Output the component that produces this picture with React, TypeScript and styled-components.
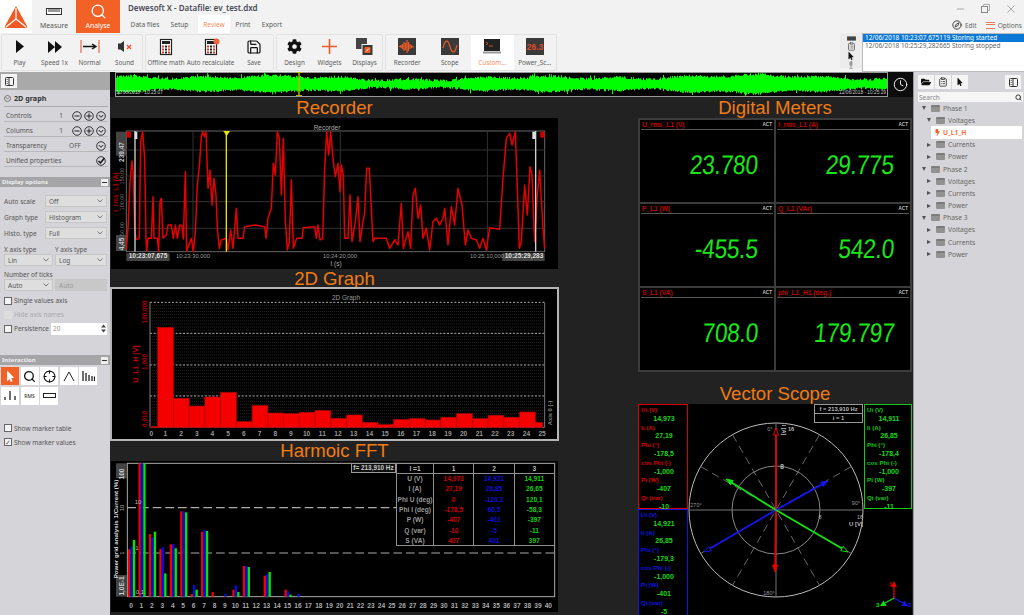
import React from "react";
import styled, { createGlobalStyle } from "styled-components";
import { Clock, ClipboardList, Compass, Crosshair, Save, Search } from "lucide-react";
import { FaBolt, FaCog, FaFolderOpen, FaMousePointer } from "react-icons/fa";

const GlobalStyle = createGlobalStyle`
  html, body { margin: 0; padding: 0; background: #f2f2f2; }
  * { box-sizing: border-box; }
  #root { width: 1024px; height: 615px; overflow: hidden; }
`;

const ORANGE = "#f26125";
const UI_FONT = `"Noto Sans", "Open Sans", sans-serif`;
const CHART_FONT = `"Liberation Sans", Arial, sans-serif`;

const Page = styled.div`
  width: 1024px;
  height: 615px;
  display: flex;
  flex-direction: column;
  overflow: hidden;
  font-family: ${UI_FONT};
  color: #555;
  background: #f2f2f2;
`;

/* ---------- title bar ---------- */

const TitleBar = styled.header`
  height: 33px;
  display: flex;
`;

const LogoBox = styled.div`
  width: 32px;
  height: 33px;
  background: #fff;
  display: flex;
  align-items: center;
  justify-content: center;
`;

const ModeTab = styled.div<{ $active?: boolean }>`
  width: 44px;
  height: 33px;
  display: flex;
  flex-direction: column;
  align-items: center;
  padding-top: 2px;
  font-size: 6.9px;
  line-height: 11px;
  color: ${(p) => (p.$active ? "#fff" : "#555")};
  background: ${(p) => (p.$active ? ORANGE : "transparent")};
`;

const ModeIcon = styled.div`
  height: 18px;
  display: flex;
  align-items: center;
  justify-content: center;
`;

const TitleColumn = styled.div`
  margin-left: 8px;
  display: flex;
  flex-direction: column;
`;

const AppTitle = styled.div`
  font-size: 8px;
  font-weight: 600;
  line-height: 15px;
  color: #4a4a55;
`;

const MenuTabs = styled.nav`
  display: flex;
  height: 18px;
  margin-left: 1px;
`;

const MenuTab = styled.div<{ $active?: boolean; $w: number }>`
  width: ${(p) => p.$w}px;
  display: flex;
  align-items: center;
  justify-content: center;
  font-size: 6.6px;
  color: ${(p) => (p.$active ? "#f58a60" : "#5a5a5a")};
  background: ${(p) => (p.$active ? "#fff" : "transparent")};
`;

const WindowArea = styled.div`
  margin-left: auto;
  width: 90px;
  display: flex;
  flex-direction: column;
`;

const WindowButtons = styled.div`
  height: 17px;
  display: flex;
  align-items: center;
  justify-content: space-between;
  padding: 0 9px 0 23px;
  color: #8a8a8a;
`;

const QuickActions = styled.div`
  display: flex;
  align-items: center;
  gap: 3px;
  font-size: 6.5px;
  color: #666;
  height: 16px;
  padding-left: 18px;
`;

const QuickGap = styled.span`
  width: 3px;
`;

const OptionsLines = styled.span`
  width: 9px;
  height: 7px;
  border-top: 1.5px solid #ee7b5b;
  border-bottom: 1.5px solid #ee7b5b;
  position: relative;
  &::after {
    content: "";
    display: block;
    height: 1.5px;
    margin-top: 1.3px;
    background: #ee7b5b;
  }
`;

/* ---------- toolbar ---------- */

const Toolbar = styled.div`
  height: 39px;
  display: flex;
  padding-left: 1px;
  gap: 2px;
`;

const ToolGroup = styled.div`
  display: flex;
  height: 37px;
  margin-top: 1px;
  border: 1px solid #e2e2e2;
  border-radius: 2px;
`;

const ToolButton = styled.div<{ $w: number; $active?: boolean }>`
  width: ${(p) => p.$w}px;
  display: flex;
  flex-direction: column;
  align-items: center;
  background: ${(p) => (p.$active ? "#fff" : "transparent")};
  color: ${(p) => (p.$active ? "#f58a60" : "#5c5c5c")};
  font-size: 6.3px;
  white-space: nowrap;
`;

const ToolIcon = styled.div`
  height: 23px;
  display: flex;
  align-items: center;
  justify-content: center;
  color: #111;
`;

const ToolLabel = styled.span`
  line-height: 10px;
`;

const EventArea = styled.div`
  margin-left: auto;
  display: flex;
  height: 39px;
`;

const EventIcons = styled.div`
  width: 22px;
  height: 35px;
  background: #ececec;
  display: flex;
  flex-direction: column;
  align-items: center;
  justify-content: flex-start;
  gap: 1px;
  padding-top: 3px;
  color: #555;
  & > svg {
    flex: none;
  }
`;

const RulerSmall = styled.svg`
  width: 9px;
  height: 5px;
`;

const EventList = styled.div`
  width: 162px;
  background: #fff;
  border: 1px solid #bbb;
  border-right: none;
  font-size: 6.45px;
  line-height: 8px;
`;

const EventRow = styled.div<{ $selected?: boolean }>`
  height: 8px;
  padding-left: 2px;
  white-space: nowrap;
  color: ${(p) => (p.$selected ? "#fff" : "#666")};
  background: ${(p) => (p.$selected ? "#0a78d7" : "transparent")};
`;

/* ---------- main area ---------- */

const Main = styled.main`
  flex: 1;
  display: flex;
  min-height: 0;
`;

const LeftPanel = styled.aside`
  width: 110px;
  background: #d5d4d8;
  display: flex;
  flex-direction: column;
  font-size: 6.5px;
  color: #555;
`;

const PanelTop = styled.div`
  height: 18px;
  background: #a9a9a9;
  padding: 2px 1px;
`;

const SquareButton = styled.div`
  width: 16px;
  height: 14px;
  background: #f4f4f4;
  display: flex;
  align-items: center;
  justify-content: center;
`;

const PanelHeading = styled.div`
  height: 17px;
  margin: 0 2px 0 4px;
  display: flex;
  align-items: center;
  gap: 3px;
  font-size: 7.2px;
  font-weight: 700;
  color: #333;
  border-bottom: 1px solid #aaa;
`;

const PropRow = styled.div`
  height: 15px;
  margin: 0 2px 0 4px;
  padding: 3px 0 0 2px;
  display: flex;
  align-items: center;
  border-bottom: 1px solid #b8b8b8;
`;

const PropName = styled.span<{ $w?: number }>`
  width: ${(p) => p.$w ?? 48}px;
`;

const PropValue = styled.span<{ $shift?: number }>`
  width: 14px;
  margin-left: ${(p) => p.$shift ?? 0}px;
  text-align: center;
`;

const PropButtons = styled.span`
  margin-left: auto;
  margin-right: 2px;
  display: flex;
  gap: 2px;
`;

const SectionHeader = styled.div<{ $top: number }>`
  margin-top: ${(p) => p.$top}px;
  height: 10px;
  background: #a5a5a8;
  color: #eee;
  font-size: 6px;
  font-weight: 700;
  padding: 0 2px;
  display: flex;
  align-items: center;
  justify-content: space-between;
`;

const CollapseBox = styled.span`
  width: 7px;
  height: 7px;
  background: #eee;
  display: flex;
  align-items: center;
  justify-content: center;
  &::after {
    content: "";
    width: 5px;
    height: 1px;
    background: #333;
  }
`;

const FieldRow = styled.div<{ $top?: number }>`
  display: flex;
  align-items: center;
  height: 12px;
  margin: ${(p) => p.$top ?? 4}px 3px 0 4px;
`;

const FieldName = styled.span`
  width: 41px;
`;

const FieldPair = styled.div<{ $top: number }>`
  display: grid;
  grid-template-columns: 49px 52px;
  column-gap: 2px;
  margin: ${(p) => p.$top}px 3px 0 4px;
`;

const SmallCaption = styled.span<{ $wide?: boolean }>`
  line-height: 9px;
  height: 9px;
  display: block;
  ${(p) => (p.$wide ? "grid-column: span 2;" : "")}
`;

const Dropdown = styled.div<{ $disabled?: boolean }>`
  flex: 1;
  height: 12px;
  background: ${(p) => (p.$disabled ? "#c8c8c8" : "#dededf")};
  border: 1px solid #c6c6c6;
  display: flex;
  align-items: center;
  justify-content: space-between;
  padding: 0 3px;
  color: ${(p) => (p.$disabled ? "#999" : "#555")};
`;

const CheckRow = styled.label<{ $top: number; $faded?: boolean }>`
  display: flex;
  align-items: center;
  gap: 2px;
  height: 9px;
  margin: ${(p) => p.$top}px 0 0 4px;
  color: ${(p) => (p.$faded ? "#aaa" : "#555")};
`;

const CheckBox = styled.span<{ $faded?: boolean }>`
  width: 8px;
  height: 8px;
  flex: none;
  background: ${(p) => (p.$faded ? "#dcdcdc" : "#f4f4f4")};
  border: 1px solid ${(p) => (p.$faded ? "#ddd" : "#666")};
  display: flex;
  align-items: center;
  justify-content: center;
  font-size: 7px;
  line-height: 7px;
`;

const SpinField = styled.div`
  width: 58px;
  height: 12px;
  margin-left: auto;
  margin-right: 3px;
  background: #fff;
  color: #999;
  padding-left: 2px;
  display: flex;
  align-items: center;
  justify-content: space-between;
`;

const ToolGrid = styled.div`
  display: grid;
  grid-template-columns: repeat(5, 18px);
  grid-auto-rows: 18px;
  gap: 1.5px;
  margin: 2px 0 0 1px;
`;

const InteractionTool = styled.div<{ $active?: boolean }>`
  background: ${(p) => (p.$active ? ORANGE : "#fff")};
  display: flex;
  align-items: center;
  justify-content: center;
  color: #111;
  font-size: 5px;
`;

/* ---------- centre ---------- */

const Center = styled.section`
  width: 803px;
  background: #222;
  display: flex;
  flex-direction: column;
`;

const Overview = styled.div`
  height: 25px;
  padding-left: 5px;
  background: #0c0c0c;
  display: flex;
  flex: none;
`;

const ClockBox = styled.div`
  width: 25px;
  display: flex;
  align-items: center;
  justify-content: center;
  color: #e8e8e8;
`;

const Columns = styled.div`
  flex: 1;
  display: flex;
  justify-content: space-between;
  padding: 0 1px;
  min-height: 0;
`;

const WidgetColumn = styled.div<{ $w: number }>`
  width: ${(p) => p.$w}px;
  display: flex;
  flex-direction: column;
`;

const WidgetTitle = styled.h2<{ $h: number; $top?: number }>`
  margin: ${(p) => p.$top ?? 0}px 0 0;
  height: ${(p) => p.$h}px;
  line-height: ${(p) => p.$h}px;
  text-align: center;
  font-family: ${CHART_FONT};
  font-weight: 400;
  font-size: 18.6px;
  color: #f07c12;
`;

const ChartFrame = styled.div<{ $h: number; $boxed?: boolean }>`
  position: relative;
  height: ${(p) => p.$h}px;
  background: #000;
  ${(p) => (p.$boxed ? "outline: 2px solid #b5b5b5; outline-offset: -1px;" : "")}
  svg {
    display: block;
  }
`;

const ChartSvg = styled.svg`
  font-family: ${CHART_FONT};
  overflow: visible;
`;

/* harmonic table */

const FreqTag = styled.div`
  position: absolute;
  top: 2px;
  right: 162px;
  height: 10px;
  width: 45px;
  border: 1px solid #999;
  background: #111;
  color: #ccc;
  font: 700 6.4px/8px ${CHART_FONT};
  text-align: center;
`;

const HarmonicTable = styled.table`
  position: absolute;
  top: 2px;
  right: 3px;
  width: 159px;
  border-collapse: collapse;
  table-layout: fixed;
  background: #000;
  font: 700 6.6px ${CHART_FONT};
  th, td {
    height: 10.3px;
    padding: 0;
    text-align: center;
    border-left: 1.5px solid #8f8f8f;
    border-right: 1.5px solid #8f8f8f;
    white-space: nowrap;
  }
  thead th {
    color: #bbb;
    height: 10px;
    border: 1.5px solid #8f8f8f;
  }
  thead th:first-child {
    width: 37px;
  }
  tbody tr:last-child > * {
    border-bottom: 1.5px solid #8f8f8f;
  }
  tbody th {
    color: #999;
  }
`;

const PhaseCell = styled.td<{ $c: string }>`
  color: ${(p) => p.$c};
`;

/* meters */

const MeterGrid = styled.div`
  height: 254px;
  display: grid;
  grid-template-columns: repeat(2, 1fr);
  grid-template-rows: repeat(3, 1fr);
  background: #000;
  border: 1px solid #3c3c3c;
`;

const MeterCell = styled.div`
  border: 1px solid #3c3c3c;
  display: flex;
  flex-direction: column;
`;

const MeterHeader = styled.div`
  height: 10px;
  margin: 0 1px;
  border-bottom: 1px solid #555;
  display: flex;
  align-items: center;
  justify-content: space-between;
  padding: 0 1px;
  font: 700 6.6px ${CHART_FONT};
  color: #c00000;
`;

const MeterAct = styled.span`
  color: #bbb;
  font-size: 4.6px;
`;

const MeterValue = styled.div`
  flex: 1;
  display: flex;
  align-items: center;
  justify-content: flex-end;
  padding-right: 16px;
  padding-bottom: 2px;
  font: 400 27px ${CHART_FONT};
  letter-spacing: -0.3px;
  color: #19e619;
  span {
    display: block;
    transform: skewX(-5deg) scaleX(0.84);
    transform-origin: right center;
  }
`;

/* vector scope */

const ScopeFrame = styled.div`
  position: relative;
  height: 211px;
  background: #000;
  display: grid;
  grid-template-columns: 50px 176px 48px;
  overflow: hidden;
`;

const ScopeSide = styled.div`
  display: flex;
  flex-direction: column;
`;

const ScopeBox = styled.div<{ $c: string; $open?: boolean }>`
  height: ${(p) => (p.$open ? 106 : 105)}px;
  border: 1px solid ${(p) => p.$c};
  ${(p) => (p.$open ? "border-bottom: none;" : "")}
  color: ${(p) => p.$c};
  padding: 1px 0 0 2px;
  font: 700 6.2px/8.8px ${CHART_FONT};
`;

const ScopeLabel = styled.div``;

const ScopeNumber = styled.div`
  color: #19d819;
  text-align: center;
  font-size: 7px;
`;

const ScopeTag = styled.div`
  position: absolute;
  top: 0;
  right: 49px;
  width: 49px;
  border: 1px solid #999;
  font: 700 5.8px/8px ${CHART_FONT};
  text-align: center;
  color: #bbb;
  & > div + div {
    border-top: 1px solid #999;
  }
`;

const AxisWidget = styled.svg`
  position: absolute;
  right: 0;
  bottom: 7px;
  font-family: ${CHART_FONT};
`;

/* ---------- right panel ---------- */

const RightPanel = styled.aside`
  width: 111px;
  background: #d5d4d8;
  border-left: 1px solid #999;
  display: flex;
  flex-direction: column;
  font-size: 6.7px;
  color: #666;
`;

const RightTools = styled.div`
  display: flex;
  gap: 1px;
  padding: 3px 3px 0 4px;
  height: 19px;
`;

const RightToolSpacer = styled.span`
  flex: 1;
`;

const SearchBox = styled.div`
  height: 10px;
  margin: 1px 1px 0 4px;
  padding: 0 1px 0 1px;
  background: #f6f6f6;
  color: #888;
  font-size: 6.6px;
  display: flex;
  align-items: center;
  justify-content: space-between;
`;

const Tree = styled.div`
  display: flex;
  flex-direction: column;
`;

const TreeRow = styled.div<{ $level: number; $selected?: boolean }>`
  height: 12.2px;
  display: flex;
  align-items: center;
  margin-left: ${(p) => 7 + (p.$level - 1) * 5}px;
  margin-right: 2px;
  gap: 2px;
  background: ${(p) => (p.$selected ? "#fff" : "transparent")};
  color: ${(p) => (p.$selected ? ORANGE : "#666")};
  font-weight: ${(p) => (p.$selected ? 600 : 400)};
`;

const TreeArrow = styled.span<{ $open?: boolean }>`
  width: 0;
  height: 0;
  margin: 0 3px 0 1px;
  flex: none;
  ${(p) =>
    p.$open
      ? "border-left: 2.5px solid transparent; border-right: 2.5px solid transparent; border-top: 4px solid #555;"
      : "border-top: 2.5px solid transparent; border-bottom: 2.5px solid transparent; border-left: 4px solid #555;"}
`;

const TreeFolder = styled.span`
  width: 9px;
  height: 7px;
  flex: none;
  margin-right: 1px;
  background: #929292;
  border-top: 2px solid #7c7c7c;
  border-radius: 1px;
`;

const BoltSlot = styled.span`
  width: 10px;
  display: inline-flex;
  justify-content: flex-end;
`;

/* ---------- small drawings ---------- */

const Logo = () => (
  <svg width="24" height="24" viewBox="0 0 24 24">
    <path d="M12 1 L23 21 Q23.5 23 21 23 L3 23 Q.5 23 1 21 Z" fill="#ee5a24" />
    <path d="M12 3 V14 M12 14 L2 22 M12 14 L22 22" stroke="#fff" strokeWidth="1.2" fill="none" />
  </svg>
);

const Ruler = () => (
  <svg width="16" height="7" viewBox="0 0 16 7">
    <rect x=".5" y=".5" width="15" height="6" fill="#fff" stroke="#333" />
    <path d="M3 1v3M5 1v3M7 1v3M9 1v3M11 1v3M13 1v3" stroke="#333" />
  </svg>
);

const Calc = ({ badge }: { badge?: boolean }) => (
  <svg width="18" height="18" viewBox="0 0 18 18">
    <rect x="3.5" y="1.5" width="11" height="15" fill="#fff" stroke="#222" strokeWidth="1.2" />
    <rect x="5" y="3" width="8" height="3" fill="#222" />
    {[0, 1, 2].map((c) =>
      [0, 1, 2].map((r) => (
        <rect key={`${c}${r}`} x={5 + c * 3} y={7.5 + r * 3} width="2" height="2" fill={c === 1 ? "#222" : "#c8402a"} />
      ))
    )}
    {badge && <circle cx="14.5" cy="3.5" r="3" fill="#f0653a" />}
  </svg>
);

const DarkTile = ({ children }: { children: React.ReactNode }) => (
  <svg width="18" height="17" viewBox="0 0 18 17">
    <rect width="18" height="17" fill="#3a3a3a" />
    {children}
  </svg>
);

const toolGroups = [
  [
    {
      w: 35,
      label: "Play",
      icon: (
        <svg width="10" height="13" viewBox="0 0 10 13">
          <path d="M1 0 L9 6.5 L1 13 Z" fill="#111" />
        </svg>
      ),
    },
    {
      w: 35,
      label: "Speed 1x",
      icon: (
        <svg width="14" height="12" viewBox="0 0 14 12">
          <path d="M0 0 L7 6 L0 12 Z M7 0 L14 6 L7 12 Z" fill="#111" />
        </svg>
      ),
    },
    {
      w: 35,
      label: "Normal",
      icon: (
        <svg width="20" height="13" viewBox="0 0 20 13">
          <path d="M1 0V13M19 0V13" stroke="#ee6a4a" strokeWidth="1.2" />
          <path d="M3 6.5H15M12 4L16 6.5L12 9" stroke="#111" strokeWidth="1.4" fill="none" />
        </svg>
      ),
    },
    {
      w: 35,
      label: "Sound",
      icon: (
        <svg width="14" height="13" viewBox="0 0 14 13">
          <path d="M0 3.5H2.5L6 1V12L2.5 9.5H0Z" fill="#333" />
          <path d="M9 5L13 9M13 5L9 9" stroke="#e84a2a" strokeWidth="1.2" />
        </svg>
      ),
    },
  ],
  [
    { w: 40, label: "Offline math", icon: <Calc /> },
    { w: 49, label: "Auto recalculate", icon: <Calc badge /> },
    { w: 38, label: "Save", icon: <Save size={16} strokeWidth={1.8} color="#111" /> },
  ],
  [
    { w: 35, label: "Design", icon: <FaCog size={15} color="#111" /> },
    {
      w: 35,
      label: "Widgets",
      icon: (
        <svg width="15" height="15" viewBox="0 0 15 15">
          <path d="M7.5 0V15M0 7.5H15" stroke="#ee5a24" strokeWidth="1.6" />
        </svg>
      ),
    },
    {
      w: 35,
      label: "Displays",
      icon: (
        <svg width="18" height="18" viewBox="0 0 18 18">
          <rect x="0" y="0" width="11" height="11" fill="#444" />
          <rect x="6" y="6.5" width="11" height="11" fill="#3a3a3a" stroke="#f2f2f2" />
          <rect x="8.5" y="9" width="6" height="6" rx="1" fill="#ee5a24" />
          <path d="M10 13.5L13 10.5" stroke="#fff" />
        </svg>
      ),
    },
  ],
  [
    {
      w: 42.5,
      label: "Recorder",
      icon: (
        <DarkTile>
          <path
            d="M1 8.5h2M3 7v3M4.5 6v5M6 4v9M7.5 5v7M9 2v13M10.500 4v9M12 6v5M13.500 7v3M15 8v1.500"
            stroke="#ee5a24"
            strokeWidth="1.2"
          />
        </DarkTile>
      ),
    },
    {
      w: 42.5,
      label: "Scope",
      icon: (
        <DarkTile>
          <path d="M2 10C4 1 7 1 9 8.500S14 16 16 7" stroke="#ee5a24" strokeWidth="1.2" fill="none" />
        </DarkTile>
      ),
    },
    {
      w: 42.5,
      label: "Custom...",
      active: true,
      icon: (
        <svg width="18" height="16" viewBox="0 0 18 16">
          <rect x="1" y="0" width="16" height="12" fill="#222" />
          <path d="M3 3L5 4.500L3 6M6 7H10" stroke="#ee5a24" fill="none" strokeWidth=".8" />
          <rect x="0" y="12.500" width="18" height="2" fill="#999" />
        </svg>
      ),
    },
    {
      w: 42.5,
      label: "Power_Sc...",
      icon: (
        <DarkTile>
          <text x="9" y="11.500" fontSize="8.500" fontWeight="700" textAnchor="middle" fill="#e04a24" fontFamily={CHART_FONT}>
            26.3
          </text>
        </DarkTile>
      ),
    },
  ],
];

const CircleGlyph = ({ kind }: { kind: "minus" | "plus" | "down" | "check" }) => (
  <svg width="10" height="10" viewBox="0 0 10 10">
    <circle cx="5" cy="5" r="4.300" fill="none" stroke="#222" strokeWidth=".9" />
    {kind === "minus" && <path d="M2.500 5H7.500" stroke="#222" />}
    {kind === "plus" && <path d="M2.500 5H7.500M5 2.500V7.500" stroke="#222" />}
    {kind === "down" && <path d="M2.800 4L5 6.300L7.200 4" stroke="#222" fill="none" />}
    {kind === "check" && <path d="M2.500 5L4.500 7L8.500 2" stroke="#111" strokeWidth="1.500" fill="none" />}
  </svg>
);

const Chevron = () => (
  <svg width="6" height="4" viewBox="0 0 6 4">
    <path d="M.5 .5L3 3L5.500 .5" stroke="#777" fill="none" />
  </svg>
);

const PanelToggle = () => (
  <svg width="9" height="9" viewBox="0 0 9 9">
    <rect x=".5" y=".5" width="8" height="8" rx="1" fill="none" stroke="#333" />
    <path d="M4 .5V8.500" stroke="#333" />
    <path d="M1.500 2.500H3M1.500 4.500H3M1.500 6.500H3" stroke="#333" strokeWidth=".6" />
  </svg>
);

const Select = ({ value, disabled }: { value: string; disabled?: boolean }) => (
  <Dropdown $disabled={disabled}>
    {value}
    {!disabled && <Chevron />}
  </Dropdown>
);

/* ---------- chart data ---------- */

const seeded = (seed: number) => {
  let s = seed;
  return () => {
    s = (s * 16807) % 2147483647;
    return s / 2147483647;
  };
};

const overviewPath = (() => {
  const rnd = seeded(4711);
  let d = "";
  for (let x = 116; x < 887; x++) {
    const env = 4.5 + 1.3 * Math.sin(x / 37) + 1 * Math.sin(x / 11 + 2) + 1.2 * Math.sin(x / 93);
    const up = env + rnd() * 2.6 + (rnd() > 0.96 ? 2.5 : 0);
    const down = env + rnd() * 2.4 + (rnd() > 0.97 ? 2.5 : 0);
    d += `M${x + 0.5} ${(84.5 - up).toFixed(1)}V${(85.5 + down).toFixed(1)}`;
  }
  return d;
})();

const recorderTrace: number[][] = [
  [55, 465], [60, 400], [66, 260], [72, 198], [76, 240], [80, 400], [84, 434], [94, 430], [98, 140], [104, 110],
  [110, 190], [114, 430], [116, 468], [120, 430], [130, 430], [135, 305], [138, 430], [148, 430], [152, 470],
  [156, 320], [160, 310], [165, 430], [175, 420], [180, 390], [190, 390], [196, 430], [202, 390], [208, 430],
  [215, 390], [222, 392], [226, 432], [232, 230], [236, 468], [250, 430], [256, 470], [262, 410], [268, 270],
  [274, 215], [280, 125], [284, 110], [290, 125], [294, 110], [300, 280], [306, 225], [312, 330], [318, 250],
  [324, 300], [328, 400], [334, 460], [340, 435], [355, 430], [360, 465], [368, 405], [375, 460], [385, 340],
  [390, 430], [405, 430], [410, 395], [440, 390], [470, 395], [474, 430], [480, 370], [490, 340], [496, 205],
  [502, 240], [508, 110], [514, 130], [520, 300], [526, 130], [532, 375], [538, 465], [544, 440], [550, 255],
  [556, 460], [566, 430], [582, 430], [586, 398], [620, 395], [625, 430], [630, 390], [636, 435], [644, 430],
  [650, 220], [656, 110], [662, 180], [668, 110], [676, 200], [682, 245], [690, 205], [696, 290], [700, 210],
  [706, 240], [710, 430], [720, 430], [726, 300], [732, 440], [742, 380], [750, 305], [756, 440], [770, 350],
  [776, 220], [784, 220], [790, 340], [795, 440], [800, 430], [835, 430], [845, 460], [860, 435], [870, 450],
  [880, 325], [886, 460], [900, 410], [908, 460], [915, 300], [922, 280], [930, 370], [938, 330], [945, 430],
  [955, 400], [965, 465], [975, 380], [985, 370], [995, 390], [1005, 370], [1010, 340], [1020, 450], [1030, 335],
  [1040, 390], [1050, 280], [1062, 330], [1072, 450], [1080, 405], [1090, 430], [1105, 435], [1115, 460],
  [1125, 430], [1135, 465], [1145, 398], [1175, 403], [1185, 250], [1195, 130], [1205, 115], [1212, 150],
  [1222, 110], [1228, 280], [1234, 460], [1240, 440], [1250, 270], [1258, 360], [1266, 215], [1272, 240],
  [1280, 440], [1288, 300], [1295, 225], [1305, 400], [1310, 460],
];

const histogramTops = [470, 172, 385, 408, 381, 367, 455, 407, 429, 431, 427, 422, 445, 435, 457, 464, 448, 446, 450, 442, 431, 446, 436, 442, 426, 457];

const harmonicBars: (number | null)[][] = [
  [328, 320, 300], [70, 70, 70], [282, 292, 275], [327, 322, 400], [313, 312, 325], [214, 214, 217],
  [462, 435, 449], [275, 270, 273], [456, null, null], [null, 462, null], [449, 436, 456], [378, 378, 381],
  [null, null, null], [407, 402, 396], [null, null, null], [449, 454, 464], [null, 462, null],
];

const harmonicRows = [
  ["U (V)", "14,973", "14,921", "14,911"],
  ["I (A)", "27,19", "26,85", "26,65"],
  ["Phi U (deg)", "0", "-120,2", "120,1"],
  ["Phi I (deg)", "-178,5", "60,5", "-58,3"],
  ["P (W)", "-407", "-401", "-397"],
  ["Q (var)", "-10", "-5", "-11"],
  ["S (VA)", "407", "401", "397"],
];

const PHASE_COLORS = ["#d00000", "#1010d8", "#12d012"];

const meters = [
  ["U_rms_L1 (V)", "23.780"],
  ["I_rms_L1 (A)", "29.775"],
  ["P_L1 (W)", "-455.5"],
  ["Q_L1 (VAr)", "542.0"],
  ["S_L1 (VA)", "708.0"],
  ["phi_L1_H1 (deg.)", "179.797"],
];

const scopeBoxes = {
  red: ["14,973", "27,19", "-178,5", "-1,000", "-407", "-10"],
  blue: ["14,921", "26,85", "-179,3", "-1,000", "-401", "-5"],
  green: ["14,911", "26,85", "-178,4", "-1,000", "-397", "-11"],
};

const scopeNames = ["Ui (V)", "Ii (A)", "Phi (°)", "cos Phi (-)", "Pi (W)", "Qi (var)"];

const treeData = [
  { name: "Phase 1", open: true, kids: ["Voltages", "Currents", "Power"] },
  { name: "Phase 2", open: true, kids: ["Voltages", "Currents", "Power"] },
  { name: "Phase 3", open: true, kids: ["Voltages", "Currents", "Power"] },
];

/* ---------- charts ---------- */

const zoomCrop = (x: number, y: number) => `translate(${x} ${y}) scale(0.33333)`;

const OverviewStrip = () => (
  <svg width="773" height="25" viewBox="115 73 773 25">
    <rect x="115.500" y="73.500" width="772" height="24" fill="#000" stroke="#999" />
    <path d={overviewPath} stroke="#00ff00" strokeWidth="1" />
    <path d="M299 73V97" stroke="#b9b400" strokeWidth="1.500" />
    <path d="M296 73.500H302M296 96.500H302" stroke="#b9b400" />
    <text x="116" y="95" fontSize="4.800" fill="#ccc" fontFamily={CHART_FONT}>12/06/2018 - 10:23:07</text>
    <text x="886" y="95" fontSize="4.800" fill="#ccc" textAnchor="end" fontFamily={CHART_FONT}>12/06/2018 - 10:25:29</text>
  </svg>
);

const RecorderChart = () => (
  <ChartSvg width="447" height="151" viewBox="111 118 447 151">
    <text x="327" y="130" fontSize="6.500" fill="#aaa" textAnchor="middle">Recorder</text>
    <g transform={zoomCrop(108, 95)}>
      <rect x="55" y="108" width="1255" height="362" fill="none" stroke="#666" strokeWidth="3" />
      <path d="M55 165H1310M55 243H1310M55 320H1310M55 400H1310M255 108V470M697 108V470M1138 108V470" stroke="#333" strokeWidth="3" />
      <path d={"M" + recorderTrace.map((p) => p.join(" ")).join("L")} stroke="#e60000" strokeWidth="4.500" fill="none" strokeLinejoin="round" />
      <path d="M355 115V470" stroke="#e6e600" strokeWidth="4" />
      <path d="M346 108H366L356 124Z" fill="#e6e600" />
      <path d="M81 108V470M1283 108V470" stroke="#cfcfcf" strokeWidth="4" />
      <rect x="80" y="110" width="8" height="22" fill="#ddd" />
      <rect x="1273" y="110" width="10" height="22" fill="#ddd" />
      <rect x="56" y="110" width="13" height="18" fill="#d00000" />
      <rect x="1297" y="110" width="13" height="18" fill="#d00000" />
      <rect x="24" y="110" width="30" height="72" fill="#444" />
      <rect x="24" y="420" width="30" height="48" fill="#444" />
      <rect x="55" y="475" width="130" height="23" fill="#444" />
      <rect x="1183" y="475" width="127" height="23" fill="#444" />
    </g>
    <text transform="translate(124 152) rotate(-90)" fontSize="6.500" fill="#ccc" fontWeight="700" textAnchor="middle">239,47</text>
    <text transform="translate(124 244) rotate(-90)" fontSize="6.500" fill="#ccc" fontWeight="700" textAnchor="middle">4,45</text>
    <text transform="translate(124 176) rotate(-90)" fontSize="5.500" fill="#777" textAnchor="middle">150,00</text>
    <text transform="translate(124 202) rotate(-90)" fontSize="5.500" fill="#777" textAnchor="middle">100,00</text>
    <text transform="translate(124 229) rotate(-90)" fontSize="5.500" fill="#777" textAnchor="middle">50,00</text>
    <text transform="translate(117.500 192) rotate(-90)" fontSize="6.500" fill="#b00000" fontWeight="700" textAnchor="middle">I_rms_L1 (A)</text>
    <text x="148" y="258" fontSize="6.500" fill="#ddd" fontWeight="700" textAnchor="middle">10:23:07,675</text>
    <text x="193" y="258" fontSize="5.800" fill="#999" textAnchor="middle">10:23:30,000</text>
    <text x="340" y="258" fontSize="5.800" fill="#999" textAnchor="middle">10:24:20,000</text>
    <text x="487" y="258" fontSize="5.800" fill="#999" textAnchor="middle">10:25:10,000</text>
    <text x="524" y="258" fontSize="6.500" fill="#ddd" fontWeight="700" textAnchor="middle">10:25:29,283</text>
    <text x="336" y="266" fontSize="6.500" fill="#aaa" textAnchor="middle">t (s)</text>
  </ChartSvg>
);

const HistogramChart = () => {
  const minors: number[] = [];
  for (let y = 106; y < 472; y += 9.300) minors.push(y);
  return (
    <ChartSvg width="447" height="152" viewBox="111 288 447 152">
      <text x="346" y="300" fontSize="6.500" fill="#999" textAnchor="middle">2D Graph</text>
      <g transform={zoomCrop(108, 270)}>
        {minors.map((y) => (
          <path key={y} d={`M126 ${y}H1310`} stroke="#333" strokeWidth="2" strokeDasharray="3 3" />
        ))}
        <path d="M126 97H1310M126 190H1310M126 285H1310M126 378H1310" stroke="#aaa" strokeWidth="3" strokeDasharray="6 5" />
        <path d="M126 97V472H1310V97" stroke="#777" strokeWidth="3" fill="none" />
        {histogramTops.map((top, i) => {
          const x = i === 0 ? 128 : 149 + 47.200 * (i - 1);
          const w = i === 0 ? 21 : i === 25 ? 22 : 47.200;
          return <rect key={i} x={x} y={top} width={w} height={472 - top} fill="#f40000" stroke="#b00000" strokeWidth="2" />;
        })}
      </g>
      {histogramTops.map((_, i) => (
        <text key={i} x={108 + (i === 0 ? 130 : 172 + 47.100 * (i - 1)) / 3} y="435.500" fontSize="6.600" fontWeight="700" fill="#999" textAnchor="middle">
          {i}
        </text>
      ))}
      <text transform="translate(147 312) rotate(-90)" fontSize="6.300" fill="#b00000" fontWeight="700" textAnchor="middle">100,000</text>
      <text transform="translate(147 362) rotate(-90)" fontSize="6.300" fill="#b00000" fontWeight="700" textAnchor="middle">1,000</text>
      <text transform="translate(147 419) rotate(-90)" fontSize="6.300" fill="#b00000" fontWeight="700" textAnchor="middle">0,010</text>
      <text transform="translate(138 364) rotate(-90)" fontSize="7" fill="#d00000" fontWeight="700" textAnchor="middle">U_L1_H [V]</text>
      <text transform="translate(552 413) rotate(-90)" fontSize="5.800" fill="#888" fontWeight="700" textAnchor="middle">Axis 0 (-)</text>
    </ChartSvg>
  );
};

const HarmonicChart = () => (
  <ChartSvg width="447" height="151" viewBox="111 461 447 151">
    <g transform={zoomCrop(108, 440)}>
      <rect x="24" y="70" width="32" height="45" fill="#444" />
      <rect x="24" y="405" width="32" height="65" fill="#444" />
      <rect x="58" y="70" width="1282" height="400" fill="none" stroke="#aaa" strokeWidth="3" />
      <path d="M58 203H1340M58 339H1340" stroke="#aaa" strokeWidth="3.500" strokeDasharray="26 12" />
      {harmonicBars.map((group, i) =>
        group.map((top, j) =>
          top === null ? null : (
            <rect key={`${i}-${j}`} x={58 + 31.300 * i + j * 7.300 + 2} y={top} width="7" height={470 - top} fill={["#f00000", "#0808e8", "#00e800"][j]} />
          )
        )
      )}
    </g>
    <text transform="translate(124 474) rotate(-90)" fontSize="6.500" fill="#ccc" fontWeight="700" textAnchor="middle">100</text>
    <text transform="translate(124 586) rotate(-90)" fontSize="6.500" fill="#ccc" fontWeight="700" textAnchor="middle">1,0E-1</text>
    <text transform="translate(124 508) rotate(-90)" fontSize="6" fill="#aaa" textAnchor="middle">10</text>
    <text transform="translate(124 553) rotate(-90)" fontSize="6" fill="#aaa" textAnchor="middle">1</text>
    <text transform="translate(117.500 529) rotate(-90)" fontSize="6.200" fill="#ddd" fontWeight="700" textAnchor="middle">Power grid analysis 1/Current (%)</text>
    <text x="138" y="504" fontSize="6" fill="#bbb" textAnchor="middle">10</text>
    <text x="137" y="550" fontSize="6" fill="#bbb" textAnchor="middle">1</text>
    <text x="140" y="594" fontSize="6" fill="#bbb" textAnchor="middle">0,1</text>
    {Array.from({ length: 41 }, (_, i) => (
      <text key={i} x={108 + (69 + 31.300 * i) / 3} y="608" fontSize="6.600" fontWeight="700" fill="#aaa" textAnchor="middle">
        {i}
      </text>
    ))}
  </ChartSvg>
);

const Arrow = ({ x2, y2, color, open }: { x2: number; y2: number; color: string; open?: boolean }) => {
  const cx = 775;
  const cy = 510;
  const len = Math.hypot(x2 - cx, y2 - cy);
  const ux = (x2 - cx) / len;
  const uy = (y2 - cy) / len;
  const bx = x2 - ux * 7;
  const by = y2 - uy * 7;
  const head = `${x2},${y2} ${bx - uy * 2.500},${by + ux * 2.500} ${bx + uy * 2.500},${by - ux * 2.500}`;
  return (
    <g>
      <line x1={cx} y1={cy} x2={bx} y2={by} stroke={color} strokeWidth="1.800" />
      <polygon points={head} fill={open ? "#000" : color} stroke={color} strokeWidth="1" />
    </g>
  );
};

const spokes = [30, 60, 120, 150];

const PolarPlot = () => (
  <ChartSvg width="176" height="211" viewBox="687 404 176 211">
    <circle cx="775" cy="510" r="87" fill="none" stroke="#bbb" strokeWidth="1" />
    <circle cx="775" cy="510" r="44" fill="none" stroke="#888" strokeWidth="1" />
    <path d="M688 510H862M775 423V597" stroke="#777" />
    {spokes.map((a) => {
      const r = (a * Math.PI) / 180;
      const dx = Math.cos(r) * 87;
      const dy = Math.sin(r) * 87;
      return (
        <line key={a} x1={775 - dx} y1={510 - dy} x2={775 + dx} y2={510 + dy} stroke="#666" strokeDasharray="8 5" />
      );
    })}
    <Arrow x2={775} y2={428} color="#e80000" open />
    <Arrow x2={774} y2={572} color="#e80000" />
    <Arrow x2={827} y2={481} color="#1414f0" />
    <Arrow x2={703} y2={552} color="#1414f0" open />
    <Arrow x2={725} y2={479} color="#10e010" />
    <Arrow x2={847} y2={552} color="#10e010" open />
    <text x="769" y="431" fontSize="5.500" fill="#999" textAnchor="middle">0°</text>
    <text x="695" y="507" fontSize="5.500" fill="#999" textAnchor="middle">270°</text>
    <text x="855" y="505" fontSize="5.500" fill="#999" textAnchor="middle">90°</text>
    <text x="768" y="595" fontSize="5.500" fill="#999" textAnchor="middle">180°</text>
    <text x="819" y="519" fontSize="5.500" fill="#bbb" textAnchor="middle">8</text>
    <text x="859" y="519" fontSize="5.500" fill="#bbb" textAnchor="middle">16</text>
    <text x="855" y="526" fontSize="6" fontWeight="700" fill="#bbb" textAnchor="middle">U [V]</text>
    <text x="781" y="469" fontSize="6.500" fontWeight="700" fill="#bbb" textAnchor="middle">8</text>
    <text transform="translate(781 430) rotate(90)" fontSize="5.500" fontWeight="700" fill="#bbb" textAnchor="middle">I [A]</text>
    <text x="790" y="431" fontSize="5.500" fontWeight="700" fill="#bbb" textAnchor="middle">16</text>
  </ChartSvg>
);

const ScopeInfo = ({ values, color, open }: { values: string[]; color: string; open?: boolean }) => (
  <ScopeBox $c={color} $open={open}>
    {values.map((v, i) => (
      <React.Fragment key={i}>
        <ScopeLabel>{scopeNames[i]}</ScopeLabel>
        <ScopeNumber>{v}</ScopeNumber>
      </React.Fragment>
    ))}
  </ScopeBox>
);

/* ---------- page ---------- */

export default function App() {
  return (
    <Page>
      <GlobalStyle />
      <TitleBar>
        <LogoBox>
          <Logo />
        </LogoBox>
        <ModeTab>
          <ModeIcon>
            <Ruler />
          </ModeIcon>
          Measure
        </ModeTab>
        <ModeTab $active>
          <ModeIcon>
            <Search size={17} color="#fff" strokeWidth={1.8} />
          </ModeIcon>
          Analyse
        </ModeTab>
        <TitleColumn>
          <AppTitle>Dewesoft X - Datafile: ev_test.dxd</AppTitle>
          <MenuTabs>
            <MenuTab $w={32}>Data files</MenuTab>
            <MenuTab $w={37}>Setup</MenuTab>
            <MenuTab $w={32} $active>Review</MenuTab>
            <MenuTab $w={26}>Print</MenuTab>
            <MenuTab $w={32}>Export</MenuTab>
          </MenuTabs>
        </TitleColumn>
        <WindowArea>
          <WindowButtons>
            <svg width="7" height="2"><path d="M0 1H7" stroke="#aaa" /></svg>
            <svg width="9" height="9">
              <rect x=".5" y="2.500" width="6" height="6" fill="none" stroke="#888" />
              <path d="M2.500 2.500V.5H8.500V6.500H6.500" fill="none" stroke="#aaa" />
            </svg>
            <svg width="8" height="8"><path d="M.5 .5L7.500 7.500M7.500 .5L.5 7.500" stroke="#aaa" /></svg>
          </WindowButtons>
          <QuickActions>
            <Compass size={10} color="#222" />
            Edit
            <QuickGap />
            <OptionsLines />
            Options
          </QuickActions>
        </WindowArea>
      </TitleBar>

      <Toolbar>
        {toolGroups.map((group, g) => (
          <ToolGroup key={g}>
            {group.map((b) => (
              <ToolButton key={b.label} $w={b.w} $active={"active" in b ? b.active : false}>
                <ToolIcon>{b.icon}</ToolIcon>
                <ToolLabel>{b.label}</ToolLabel>
              </ToolButton>
            ))}
          </ToolGroup>
        ))}
        <EventArea>
          <EventIcons>
            <RulerSmall viewBox="0 0 16 7">
              <rect x=".5" y=".5" width="15" height="6" fill="#444" stroke="#333" />
            </RulerSmall>
            <ClipboardList size={9} />
            <FaMousePointer size={8} color="#111" />
            <svg width="6" height="8" viewBox="0 0 6 8">
              <rect x="1.500" y="0" width="3" height="5" rx="1.500" fill="#999" />
              <path d="M3 5V8M1 8H5" stroke="#999" />
            </svg>
          </EventIcons>
          <EventList>
            <EventRow $selected>12/06/2018 10:23:07,675119 Storing started</EventRow>
            <EventRow>12/06/2018 10:25:29,282665 Storing stopped</EventRow>
          </EventList>
        </EventArea>
      </Toolbar>

      <Main>
        <LeftPanel>
          <PanelTop>
            <SquareButton>
              <PanelToggle />
            </SquareButton>
          </PanelTop>
          <PanelHeading>
            <svg width="7" height="7" viewBox="0 0 7 7">
              <circle cx="3.500" cy="3.500" r="3" fill="none" stroke="#555" strokeWidth=".7" />
              <path d="M2 2.500L3.500 4L5 2.500" stroke="#555" strokeWidth=".7" fill="none" />
            </svg>
            2D graph
          </PanelHeading>
          <PropRow>
            <PropName>Controls</PropName>
            <PropValue>1</PropValue>
            <PropButtons>
              <CircleGlyph kind="minus" />
              <CircleGlyph kind="plus" />
              <CircleGlyph kind="down" />
            </PropButtons>
          </PropRow>
          <PropRow>
            <PropName>Columns</PropName>
            <PropValue>1</PropValue>
            <PropButtons>
              <CircleGlyph kind="minus" />
              <CircleGlyph kind="plus" />
              <CircleGlyph kind="down" />
            </PropButtons>
          </PropRow>
          <PropRow>
            <PropName>Transparency</PropName>
            <PropValue $shift={14}>OFF</PropValue>
            <PropButtons>
              <CircleGlyph kind="down" />
            </PropButtons>
          </PropRow>
          <PropRow>
            <PropName $w={70}>Unified properties</PropName>
            <PropButtons>
              <CircleGlyph kind="check" />
            </PropButtons>
          </PropRow>

          <SectionHeader $top={10}>
            Display options
            <CollapseBox />
          </SectionHeader>
          <FieldRow $top={8}>
            <FieldName>Auto scale</FieldName>
            <Select value="Off" />
          </FieldRow>
          <FieldRow>
            <FieldName>Graph type</FieldName>
            <Select value="Histogram" />
          </FieldRow>
          <FieldRow>
            <FieldName>Histo. type</FieldName>
            <Select value="Full" />
          </FieldRow>
          <FieldPair $top={6}>
            <SmallCaption>X axis type</SmallCaption>
            <SmallCaption>Y axis type</SmallCaption>
            <Select value="Lin" />
            <Select value="Log" />
          </FieldPair>
          <FieldPair $top={4}>
            <SmallCaption $wide>Number of ticks</SmallCaption>
            <Select value="Auto" />
            <Select value="Auto" disabled />
          </FieldPair>
          <CheckRow $top={5}>
            <CheckBox />
            Single values axis
          </CheckRow>
          <CheckRow $top={5} $faded>
            <CheckBox $faded />
            Hide axis names
          </CheckRow>
          <CheckRow $top={5}>
            <CheckBox />
            Persistence
            <SpinField>
              20
              <svg width="7" height="9" viewBox="0 0 7 9">
                <path d="M3.500 0.500L6 3.500H1ZM3.500 8.500L1 5.500H6Z" fill="#444" />
              </svg>
            </SpinField>
          </CheckRow>

          <SectionHeader $top={22}>
            Interaction
            <CollapseBox />
          </SectionHeader>
          <ToolGrid>
            <InteractionTool $active>
              <FaMousePointer size={11} color="#fff" />
            </InteractionTool>
            <InteractionTool>
              <Search size={13} color="#111" strokeWidth={2.4} />
            </InteractionTool>
            <InteractionTool>
              <Crosshair size={13} color="#111" />
            </InteractionTool>
            <InteractionTool>
              <svg width="12" height="10" viewBox="0 0 12 10">
                <path d="M1 10L6 1L11 10" stroke="#222" fill="none" />
              </svg>
            </InteractionTool>
            <InteractionTool>
              <svg width="13" height="10" viewBox="0 0 13 10">
                <path d="M1 0V10M4 2V10M7 4V10M10 5V10M12.500 5.500V10" stroke="#222" strokeWidth="1.300" />
              </svg>
            </InteractionTool>
            <InteractionTool>
              <svg width="12" height="9" viewBox="0 0 12 9">
                <path d="M1 6V9M6 0V9M11 5V9" stroke="#222" strokeWidth="1.300" />
              </svg>
            </InteractionTool>
            <InteractionTool>RMS</InteractionTool>
            <InteractionTool>
              <svg width="13" height="5" viewBox="0 0 13 5">
                <rect x=".5" y=".5" width="12" height="4" fill="none" stroke="#222" />
              </svg>
            </InteractionTool>
          </ToolGrid>
          <CheckRow $top={19}>
            <CheckBox />
            Show marker table
          </CheckRow>
          <CheckRow $top={5}>
            <CheckBox>✓</CheckBox>
            Show marker values
          </CheckRow>
        </LeftPanel>

        <Center>
          <Overview>
            <OverviewStrip />
            <ClockBox>
              <Clock size={15} strokeWidth={1.6} />
            </ClockBox>
          </Overview>
          <Columns>
            <WidgetColumn $w={447}>
              <WidgetTitle $h={21}>Recorder</WidgetTitle>
              <ChartFrame $h={151}>
                <RecorderChart />
              </ChartFrame>
              <WidgetTitle $h={19}>2D Graph</WidgetTitle>
              <ChartFrame $h={152} $boxed>
                <HistogramChart />
              </ChartFrame>
              <WidgetTitle $h={21}>Harmoic FFT</WidgetTitle>
              <ChartFrame $h={151}>
                <HarmonicChart />
                <FreqTag>f= 213,910 Hz</FreqTag>
                <HarmonicTable>
                  <thead>
                    <tr>
                      <th>I =1</th>
                      <th>1</th>
                      <th>2</th>
                      <th>3</th>
                    </tr>
                  </thead>
                  <tbody>
                    {harmonicRows.map((row) => (
                      <tr key={row[0]}>
                        <th>{row[0]}</th>
                        {row.slice(1).map((v, i) => (
                          <PhaseCell key={i} $c={PHASE_COLORS[i]}>{v}</PhaseCell>
                        ))}
                      </tr>
                    ))}
                  </tbody>
                </HarmonicTable>
              </ChartFrame>
            </WidgetColumn>

            <WidgetColumn $w={274}>
              <WidgetTitle $h={21}>Digital Meters</WidgetTitle>
              <MeterGrid>
                {meters.map(([name, value]) => (
                  <MeterCell key={name}>
                    <MeterHeader>
                      {name}
                      <MeterAct>ACT</MeterAct>
                    </MeterHeader>
                    <MeterValue>
                      <span>{value}</span>
                    </MeterValue>
                  </MeterCell>
                ))}
              </MeterGrid>
              <WidgetTitle $h={20} $top={12}>Vector Scope</WidgetTitle>
              <ScopeFrame>
                <ScopeSide>
                  <ScopeInfo values={scopeBoxes.red} color="#d80000" />
                  <ScopeInfo values={scopeBoxes.blue} color="#1414e0" open />
                </ScopeSide>
                <PolarPlot />
                <ScopeSide>
                  <ScopeInfo values={scopeBoxes.green} color="#14c814" />
                </ScopeSide>
                <ScopeTag>
                  <div>f = 213,910 Hz</div>
                  <div>i = 1</div>
                </ScopeTag>
                <AxisWidget width="36" height="28" viewBox="0 0 36 28">
                  <path d="M18 18V6" stroke="#e80000" strokeWidth="1.300" />
                  <path d="M18 1L21 7H15Z" fill="#e80000" />
                  <path d="M18 18L27 23" stroke="#1414f0" strokeWidth="1.300" />
                  <path d="M32 26L25.500 26L28.500 20.500Z" fill="#1414f0" />
                  <path d="M18 18L9 23" stroke="#10e010" strokeWidth="1.300" />
                  <path d="M4 26L10.500 26L7.500 20.500Z" fill="#10e010" />
                  <text x="13" y="6" fontSize="6" fontWeight="700" fill="#e80000">1</text>
                  <text x="0" y="27" fontSize="6" fontWeight="700" fill="#10e010">3</text>
                  <text x="32" y="27" fontSize="6" fontWeight="700" fill="#1414f0">2</text>
                </AxisWidget>
              </ScopeFrame>
            </WidgetColumn>
          </Columns>
        </Center>

        <RightPanel>
          <RightTools>
            <SquareButton><FaFolderOpen size={10} color="#111" /></SquareButton>
            <SquareButton><ClipboardList size={10} color="#333" /></SquareButton>
            <SquareButton><FaMousePointer size={8} color="#111" /></SquareButton>
            <RightToolSpacer />
            <SquareButton><PanelToggle /></SquareButton>
          </RightTools>
          <SearchBox>
            Search
            <Search size={7} color="#222" strokeWidth={3} />
          </SearchBox>
          <Tree>
            {treeData.map((phase, p) => (
              <React.Fragment key={phase.name}>
                <TreeRow $level={1}>
                  <TreeArrow $open />
                  <TreeFolder />
                  {phase.name}
                </TreeRow>
                {phase.kids.map((kid, k) => (
                  <React.Fragment key={kid}>
                    <TreeRow $level={2}>
                      <TreeArrow $open={p === 0 && k === 0} />
                      <TreeFolder />
                      {kid}
                    </TreeRow>
                    {p === 0 && k === 0 && (
                      <TreeRow $level={3} $selected>
                        <BoltSlot>
                          <FaBolt size={7} color={ORANGE} />
                        </BoltSlot>
                        U_L1_H
                      </TreeRow>
                    )}
                  </React.Fragment>
                ))}
              </React.Fragment>
            ))}
          </Tree>
        </RightPanel>
      </Main>
    </Page>
  );
}
